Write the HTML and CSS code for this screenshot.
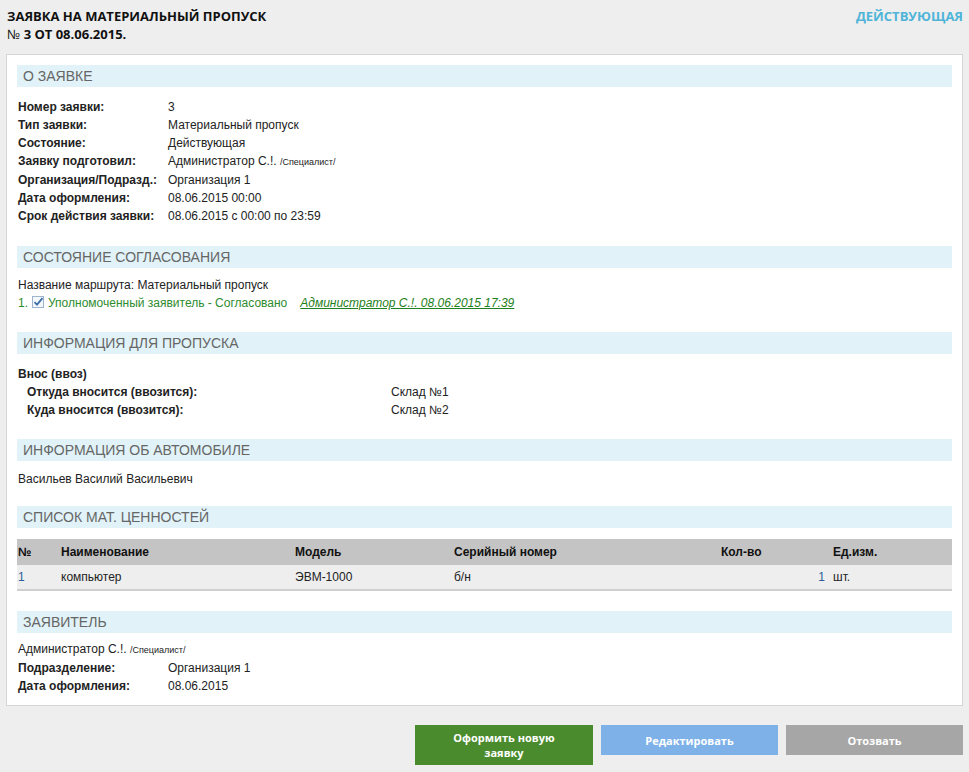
FILE: index.html
```html
<!DOCTYPE html>
<html lang="ru">

<head>
    <meta charset="UTF-8">
    <link rel="stylesheet" href="styles.css">
    <title>Заявка на материальный пропуск</title>
</head>

<body>
    <div class="page">
        <div class="top">
            <h1 class="title">ЗАЯВКА НА МАТЕРИАЛЬНЫЙ ПРОПУСК<br><span class="num">№</span> 3 ОТ 08.06.2015.</h1>
            <div class="status">ДЕЙСТВУЮЩАЯ</div>
        </div>

        <div class="panel">
            <div class="section about">
                <div class="head">О ЗАЯВКЕ</div>
                <div class="props">
                    <div class="label">Номер заявки:</div>
                    <div>3</div>
                    <div class="label">Тип заявки:</div>
                    <div>Материальный пропуск</div>
                    <div class="label">Состояние:</div>
                    <div>Действующая</div>
                    <div class="label">Заявку подготовил:</div>
                    <div>Администратор С.!. <small>/Специалист/</small></div>
                    <div class="label">Организация/Подразд.:</div>
                    <div>Организация 1</div>
                    <div class="label">Дата оформления:</div>
                    <div>08.06.2015 00:00</div>
                    <div class="label">Срок действия заявки:</div>
                    <div>08.06.2015 с 00:00 по 23:59</div>
                </div>
            </div>

            <div class="section route">
                <div class="head">СОСТОЯНИЕ СОГЛАСОВАНИЯ</div>
                <div class="line">Название маршрута: Материальный пропуск</div>
                <div class="line approve">
                    1.
                    <svg class="check" width="12" height="12" viewBox="0 0 12 12">
                        <rect x="0.5" y="0.5" width="11" height="11" fill="#f4f8fc" stroke="#9db4cc"/>
                        <path d="M2.5 6.2 L5 8.6 L10.5 2.2" fill="none" stroke="#3d6fa8" stroke-width="1.8"/>
                    </svg>
                    Уполномоченный заявитель - Согласовано
                    <a class="who" href="#">Администратор С.!. 08.06.2015 17:39</a>
                </div>
            </div>

            <div class="section pass">
                <div class="head">ИНФОРМАЦИЯ ДЛЯ ПРОПУСКА</div>
                <div class="line label">Внос (ввоз)</div>
                <div class="props wide">
                    <div class="label">Откуда вносится (ввозится):</div>
                    <div>Склад №1</div>
                    <div class="label">Куда вносится (ввозится):</div>
                    <div>Склад №2</div>
                </div>
            </div>

            <div class="section car">
                <div class="head">ИНФОРМАЦИЯ ОБ АВТОМОБИЛЕ</div>
                <div class="line">Васильев Василий Васильевич</div>
            </div>

            <div class="section goods">
                <div class="head">СПИСОК МАТ. ЦЕННОСТЕЙ</div>
                <table class="items">
                    <colgroup>
                        <col style="width: 43px">
                        <col style="width: 234px">
                        <col style="width: 159px">
                        <col style="width: 263px">
                        <col style="width: 113px">
                        <col>
                    </colgroup>
                    <thead>
                        <tr>
                            <th>№</th>
                            <th>Наименование</th>
                            <th>Модель</th>
                            <th>Серийный номер</th>
                            <th class="qty-h">Кол-во</th>
                            <th>Ед.изм.</th>
                        </tr>
                    </thead>
                    <tbody>
                        <tr>
                            <td class="blue">1</td>
                            <td>компьютер</td>
                            <td>ЭВМ-1000</td>
                            <td>б/н</td>
                            <td class="qty blue">1</td>
                            <td>шт.</td>
                        </tr>
                    </tbody>
                </table>
            </div>

            <div class="section applicant">
                <div class="head">ЗАЯВИТЕЛЬ</div>
                <div class="line first">Администратор С.!. <small>/Специалист/</small></div>
                <div class="props">
                    <div class="label">Подразделение:</div>
                    <div>Организация 1</div>
                    <div class="label">Дата оформления:</div>
                    <div>08.06.2015</div>
                </div>
            </div>
        </div>

        <div class="buttons">
            <button class="btn green">Оформить новую<br>заявку</button>
            <button class="btn blue-btn">Редактировать</button>
            <button class="btn gray">Отозвать</button>
        </div>
    </div>
</body>

</html>
```

FILE: styles.css
```css
* {
    margin: 0;
    padding: 0;
    box-sizing: border-box;
}

body {
    background: #eeeeee;
    font-family: "Liberation Sans", Arial, sans-serif;
    font-size: 12px;
    color: #222;
}

.page {
    padding: 7px 6px 0 6px;
}

.top {
    display: flex;
    justify-content: space-between;
    align-items: flex-start;
    padding-left: 1px;
    height: 47px;
}

.title {
    font-family: "Open Sans", sans-serif;
    font-size: 13px;
    font-weight: 700;
    line-height: 18px;
    color: #111;
}

.title .num {
    font-weight: 400;
}

.status {
    font-family: "Open Sans", sans-serif;
    font-size: 13px;
    font-weight: 700;
    line-height: 18px;
    color: #4fb4d8;
}

.panel {
    background: #fff;
    border: 1px solid #d3d6d9;
    padding: 10px;
}

.head {
    background: #e1f3f8;
    color: #666;
    font-size: 14px;
    height: 22px;
    line-height: 22px;
    padding-left: 6px;
    margin-bottom: 10px;
}

/* vertical rhythm per block */
.about {
    margin-bottom: 21px;
}

.about .head {
    margin-bottom: 11px;
}

.route {
    margin-bottom: 19px;
}

.route .head {
    margin-bottom: 8px;
}

.pass {
    margin-bottom: 20px;
}

.pass .head {
    margin-bottom: 11px;
}

.car {
    margin-bottom: 18px;
}

.car .head {
    margin-bottom: 9px;
}

.goods {
    margin-bottom: 20px;
}

.applicant .head {
    margin-bottom: 8px;
}

.applicant .first {
    line-height: 17px;
}

.props {
    display: grid;
    grid-template-columns: 150px 1fr;
    line-height: 18px;
    padding-left: 1px;
}

.props.wide {
    grid-template-columns: 364px 1fr;
    padding-left: 10px;
}

.label {
    font-weight: 700;
}

.line {
    line-height: 18px;
    padding-left: 1px;
}

small {
    font-size: 9px;
}

.approve {
    color: #2e8b2e;
    display: flex;
    align-items: center;
    gap: 4px;
    line-height: 19px;
}

.check {
    flex-shrink: 0;
    margin-top: -3px;
}

.who {
    color: #1e8020;
    font-style: italic;
    margin-left: 9px;
}

.items {
    width: 100%;
    border-collapse: collapse;
    table-layout: fixed;
    margin-top: 11px;
}

.items th {
    background: #c4c4c4;
    text-align: left;
    font-weight: 700;
    height: 26px;
    padding-left: 1px;
    color: #111;
}

.items td {
    background: #eeeeee;
    height: 25px;
    padding-left: 1px;
    border-bottom: 2px solid #cfcfcf;
}

.items th.qty-h {
    padding-left: 5px;
}

.items td.qty {
    text-align: right;
    padding-right: 4px;
}

.items th:last-child,
.items td:last-child {
    padding-left: 4px;
}

.blue {
    color: #2a5d96;
}

.buttons {
    display: flex;
    justify-content: flex-end;
    gap: 8px;
    margin-top: 19px;
}

.btn {
    width: 177px;
    height: 40px;
    border: none;
    color: #fff;
    font-family: "Open Sans", sans-serif;
    font-size: 11px;
    font-weight: 700;
    line-height: 15px;
}

.btn.green {
    background: #4a8b2d;
    width: 178px;
}

.btn.blue-btn {
    background: #7db1e8;
    height: 30px;
}

.btn.gray {
    background: #a6a6a6;
    height: 30px;
}
```
